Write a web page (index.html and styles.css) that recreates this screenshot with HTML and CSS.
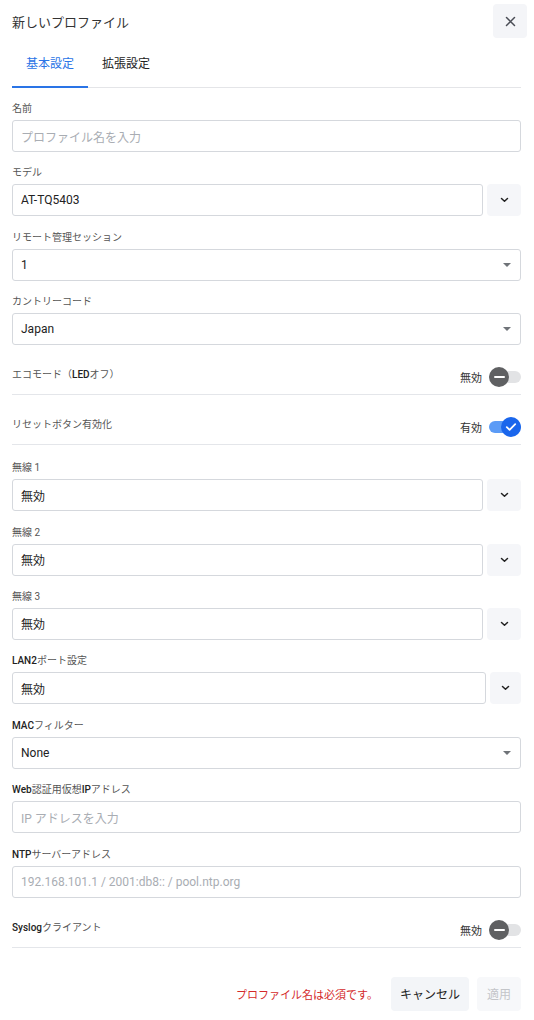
FILE: index.html
```html
<!DOCTYPE html>
<html lang="ja">
<head>
<meta charset="utf-8">
<title>新しいプロファイル</title>
<link rel="stylesheet" href="styles.css">
</head>
<body>
<div class="dialog">
  <header class="header">
    <h1 class="title">新しいプロファイル</h1>
    <button class="close" aria-label="閉じる">
      <svg width="11" height="11" viewBox="0 0 11 11"><path d="M1.5 1.5L9.5 9.5M9.5 1.5L1.5 9.5" stroke="#4a4d55" stroke-width="1.5" stroke-linecap="round"/></svg>
    </button>
  </header>
  <nav class="tabs">
    <div class="tab active">基本設定</div>
    <div class="tab">拡張設定</div>
  </nav>
  <form class="form">
    <div class="field">
      <div class="label">名前</div>
      <div class="input placeholder">プロファイル名を入力</div>
    </div>
    <div class="field">
      <div class="label">モデル</div>
      <div class="combo">
        <div class="input">AT-TQ5403</div>
        <div class="chev"><svg width="9" height="6" viewBox="0 0 9 6"><path d="M1.5 1.5L4.5 4.3L7.5 1.5" fill="none" stroke="#222" stroke-width="1.5" stroke-linecap="round" stroke-linejoin="round"/></svg></div>
      </div>
    </div>
    <div class="field">
      <div class="label">リモート管理セッション</div>
      <div class="input select">1<span class="tri"></span></div>
    </div>
    <div class="field">
      <div class="label">カントリーコード</div>
      <div class="input select">Japan<span class="tri"></span></div>
    </div>
    <div class="toggle-row">
      <div class="trow-label">エコモード（<b>LED</b>オフ）</div>
      <div class="state">無効
        <span class="switch"><span class="knob"><span class="minus"></span></span></span>
      </div>
    </div>
    <div class="toggle-row">
      <div class="trow-label">リセットボタン有効化</div>
      <div class="state">有効
        <span class="switch on"><span class="knob"><svg width="12" height="10" viewBox="0 0 12 10"><path d="M1.8 5.2L4.6 7.8L10.2 2.2" fill="none" stroke="#fff" stroke-width="1.8" stroke-linecap="round" stroke-linejoin="round"/></svg></span></span>
      </div>
    </div>
    <div class="field">
      <div class="label">無線 1</div>
      <div class="combo">
        <div class="input">無効</div>
        <div class="chev"><svg width="9" height="6" viewBox="0 0 9 6"><path d="M1.5 1.5L4.5 4.3L7.5 1.5" fill="none" stroke="#222" stroke-width="1.5" stroke-linecap="round" stroke-linejoin="round"/></svg></div>
      </div>
    </div>
    <div class="field">
      <div class="label">無線 2</div>
      <div class="combo">
        <div class="input">無効</div>
        <div class="chev"><svg width="9" height="6" viewBox="0 0 9 6"><path d="M1.5 1.5L4.5 4.3L7.5 1.5" fill="none" stroke="#222" stroke-width="1.5" stroke-linecap="round" stroke-linejoin="round"/></svg></div>
      </div>
    </div>
    <div class="field">
      <div class="label">無線 3</div>
      <div class="combo">
        <div class="input">無効</div>
        <div class="chev"><svg width="9" height="6" viewBox="0 0 9 6"><path d="M1.5 1.5L4.5 4.3L7.5 1.5" fill="none" stroke="#222" stroke-width="1.5" stroke-linecap="round" stroke-linejoin="round"/></svg></div>
      </div>
    </div>
    <div class="field">
      <div class="label"><b>LAN2</b>ポート設定</div>
      <div class="combo">
        <div class="input">無効</div>
        <div class="chev narrow"><svg width="9" height="6" viewBox="0 0 9 6"><path d="M1.5 1.5L4.5 4.3L7.5 1.5" fill="none" stroke="#222" stroke-width="1.5" stroke-linecap="round" stroke-linejoin="round"/></svg></div>
      </div>
    </div>
    <div class="field">
      <div class="label"><b>MAC</b>フィルター</div>
      <div class="input select">None<span class="tri"></span></div>
    </div>
    <div class="field">
      <div class="label"><b>Web</b>認証用仮想<b>IP</b>アドレス</div>
      <div class="input placeholder">IP アドレスを入力</div>
    </div>
    <div class="field">
      <div class="label"><b>NTP</b>サーバーアドレス</div>
      <div class="input placeholder">192.168.101.1 / 2001:db8:: / pool.ntp.org</div>
    </div>
    <div class="toggle-row">
      <div class="trow-label"><b>Syslog</b>クライアント</div>
      <div class="state">無効
        <span class="switch"><span class="knob"><span class="minus"></span></span></span>
      </div>
    </div>
  </form>
  <footer class="footer">
    <span class="error">プロファイル名は必須です。</span>
    <button class="btn">キャンセル</button>
    <button class="btn disabled">適用</button>
  </footer>
</div>
</body>
</html>
```
FILE: styles.css
```css
* { box-sizing: border-box; }
html, body { margin: 0; padding: 0; background: #fff; }
body {
  font-family: Roboto, "Noto Sans CJK JP", sans-serif;
  color: #222;
  width: 534px;
}
.dialog { width: 534px; }
.header {
  height: 42px;
  display: flex;
  align-items: center;
  justify-content: space-between;
  padding: 0 7px 0 12px;
}
.title {
  margin: 0;
  font-size: 13px;
  font-weight: 400;
  color: #333;
}
.close {
  width: 34px;
  height: 34px;
  border: none;
  border-radius: 4px;
  background: #f4f5f8;
  display: flex;
  align-items: center;
  justify-content: center;
  padding: 0;
}
.tabs {
  display: flex;
  margin: 0 13px 0 12px;
  border-bottom: 1px solid #e4e5e8;
}
.tab {
  font-size: 12px;
  color: #222;
  padding: 1px 14px 0;
  height: 46px;
  line-height: 43px;
  border-bottom: 2px solid transparent;
  margin-bottom: -1px;
}
.tab.active {
  color: #2a74e6;
  border-bottom-color: #2a74e6;
}
.form {
  display: flex;
  flex-direction: column;
  padding: 14px 13px 0 12px;
}
.field + .field { margin-top: 14.4px; }
.toggle-row + .field { margin-top: 16px; }
.label {
  font-size: 10px;
  line-height: 14px;
  height: 14px;
  color: #555;
  margin-bottom: 4px;
}
.label b, .trow-label b { font-weight: 500; color: #222; }
.input {
  height: 32px;
  border: 1px solid #d5d8dd;
  border-radius: 3px;
  padding: 0 8px 0 8px;
  display: flex;
  align-items: center;
  font-size: 12px;
  color: #222;
  background: #fff;
  flex: 1;
  min-width: 0;
}
.placeholder { color: #a9adb3; }
.select { justify-content: space-between; padding-right: 9px; }
.tri {
  width: 0;
  height: 0;
  border-left: 4px solid transparent;
  border-right: 4px solid transparent;
  border-top: 4px solid #6f7378;
}
.combo {
  display: flex;
  gap: 4px;
}
.chev {
  width: 34px;
  height: 32px;
  flex: none;
  border-radius: 4px;
  background: #f5f6f9;
  display: flex;
  align-items: center;
  justify-content: center;
}
.chev.narrow { width: 31px; }
.toggle-row {
  display: flex;
  align-items: center;
  justify-content: space-between;
  padding: 22px 0 7px;
  border-bottom: 1px solid #e4e6ea;
}
.trow-label {
  font-size: 10px;
  color: #555;
  line-height: 14px;
  padding-bottom: 4px;
}
.state {
  display: flex;
  align-items: center;
  font-size: 11px;
  color: #333;
  gap: 7px;
  height: 20px;
}
.switch {
  width: 32px;
  height: 12px;
  border-radius: 6px;
  background: #e2e3e5;
  display: flex;
  align-items: center;
  justify-content: flex-start;
}
.switch.on {
  background: #5b9bf6;
  justify-content: flex-end;
}
.knob {
  width: 20px;
  height: 20px;
  flex: none;
  border-radius: 50%;
  background: #5f6062;
  display: flex;
  align-items: center;
  justify-content: center;
  margin: -4px 0;
}
.switch.on .knob { background: #1a66ec; }
.minus {
  width: 11px;
  height: 2px;
  background: #fff;
  border-radius: 1px;
}
.footer {
  display: flex;
  align-items: center;
  justify-content: flex-end;
  padding: 29px 13px 10px 12px;
}
.error {
  font-size: 11px;
  color: #d42a2a;
  margin-right: 13px;
}
.btn {
  font-family: inherit;
  height: 34px;
  border: none;
  border-radius: 4px;
  background: #f3f5f8;
  font-size: 12px;
  color: #222;
  padding: 0 9px;
}
.btn.disabled {
  margin-left: 8px;
  background: #f7f8fa;
  color: #c3c5c9;
  padding: 0 10px;
}
```
